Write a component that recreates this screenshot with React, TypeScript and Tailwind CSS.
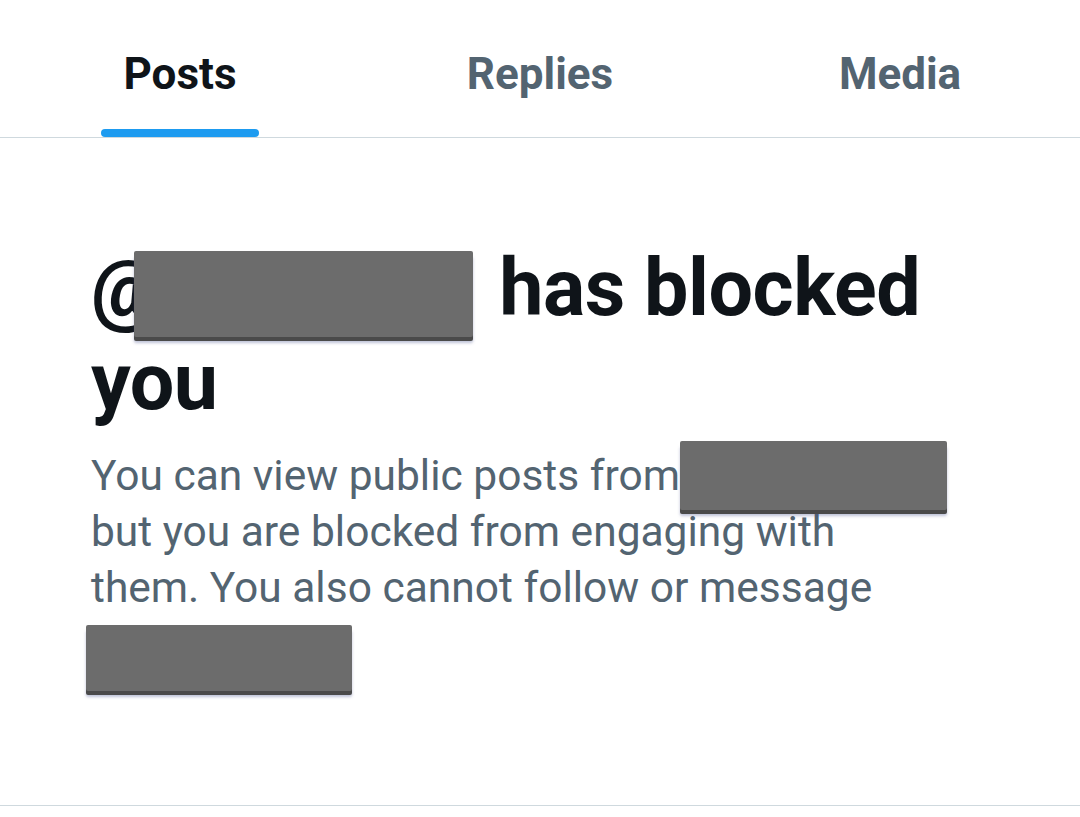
import React from "react";

const tabs = ["Posts", "Replies", "Media"];

function Redacted({ className }: { className: string }) {
  return (
    <span
      className={`inline-block rounded-[2px] bg-[#6c6c6c] shadow-[0_4px_0_#4a4a4a,0_6px_3px_rgba(70,80,140,0.35)] ${className}`}
    />
  );
}

export default function App() {
  return (
    <main className="min-h-[817px] w-[1080px] bg-white font-['Roboto',sans-serif]">
      {/* Tabs */}
      <nav className="grid grid-cols-3 border-b-[1.5px] border-[#cfd9de]">
        {tabs.map((t, i) => (
          <div key={t} className="flex h-[137px] flex-col items-center justify-end">
            <span
              className={`mb-[33px] text-[44px] font-bold leading-none ${
                i === 0 ? "text-[#0f1419]" : "text-[#536471]"
              }`}
            >
              {t}
            </span>
            <div className={`h-[8px] w-[158px] rounded-full ${i === 0 ? "bg-[#1d9bf0]" : "bg-transparent"}`} />
          </div>
        ))}
      </nav>

      {/* Blocked notice */}
      <section className="border-b-[1.5px] border-[#cfd9de] pb-[114px] pl-[91px] pt-[105px]">
        <h1 className="text-[79px] font-bold leading-[90px] tracking-[-0.5px] text-[#0f1419]">
          @
          <Redacted className="-ml-[27px] mr-[26px] h-[86px] w-[339px] align-[-22px]" />
          has blocked
          <br />
          you
        </h1>
        <p className="mt-[10px] text-[42.5px] leading-[56px] text-[#536471]">
          You can view public posts from
          <Redacted className="relative top-[4px] -mb-[8px] h-[69px] w-[267px] align-[-8px]" />
          <br />
          but you are blocked from engaging with
          <br />
          them. You also cannot follow or message
          <br />
          <Redacted className="-ml-[5px] mt-[9px] h-[66px] w-[266px] align-top" />
        </p>
      </section>
    </main>
  );
}
